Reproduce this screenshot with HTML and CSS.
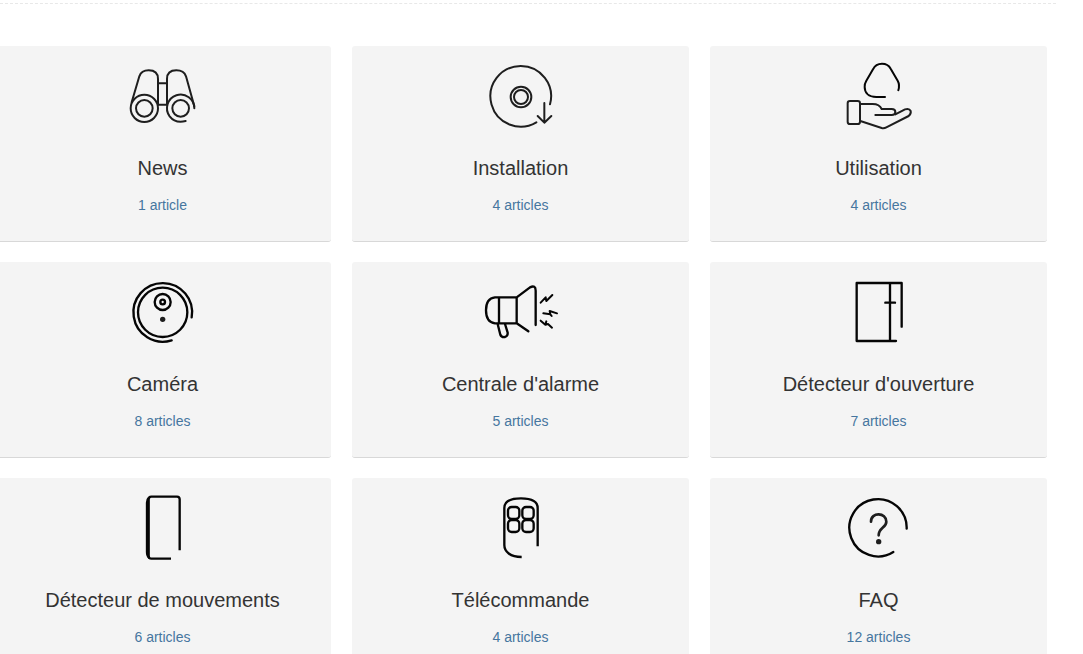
FILE: index.html
```
<!DOCTYPE html>
<html lang="fr">
<head>
<meta charset="UTF-8">
<meta name="viewport" content="width=device-width, initial-scale=1.0">
<title>Centre d'aide</title>
<link rel="stylesheet" href="styles.css">
</head>
<body>
  <hr class="divider">

  <!-- Category list -->
  <main class="categories">
    <a class="category" href="#news">
      <svg class="icon soft" viewBox="-9 3 273 240" aria-hidden="true">
        <circle cx="73" cy="160" r="41"/>
        <circle cx="73" cy="160" r="25"/>
        <circle cx="182" cy="160" r="25"/>
        <path d="M197 198Q166 206 149 184A41 41 0 1 1 223 160"/>
        <path d="M35 142L58 64Q64 46 86 46Q114 46 114 72V150M141 150V72Q141 46 169 46Q192 46 198 64L223 154M114 85H141M114 149H141"/>
      </svg>
      <h2 class="title">News</h2>
      <p class="count">1 article</p>
    </a>
    <a class="category" href="#installation">
      <svg class="icon soft" viewBox="0 3 273 240" aria-hidden="true">
        <path d="M184 202A91 91 0 1 1 225 148"/>
        <circle cx="138" cy="126" r="31"/>
        <circle cx="138" cy="126" r="21"/>
        <path d="M208 144V202M188 183L208 203L229 183"/>
      </svg>
      <h2 class="title">Installation</h2>
      <p class="count">4 articles</p>
    </a>
    <a class="category" href="#utilisation">
      <svg class="icon soft" viewBox="-6 3 273 240" aria-hidden="true">
        <path class="dark" d="M150 126H124C100 126 89 113 89 96Q88 87 94 77L114 43Q122 26 141 26Q159 26 167 41L188 77Q195 89 190 106"/>
        <rect x="38" y="138" width="37" height="69" rx="7"/>
        <path d="M76 147H113C129 147 136 153 140 162H170Q181 162 181 171Q181 180 170 180H121M76 198L140 219Q147 221 154 217L221 183Q229 177 227 168Q223 159 210 163L181 178"/>
      </svg>
      <h2 class="title">Utilisation</h2>
      <p class="count">4 articles</p>
    </a>

    <a class="category" href="#camera">
      <svg class="icon" viewBox="-9 0 273 240" aria-hidden="true">
        <path d="M155 205A88 88 0 1 1 215 136"/>
        <circle cx="128" cy="121" r="74"/>
        <circle cx="128" cy="90" r="24"/>
        <circle cx="128" cy="90" r="7"/>
        <circle class="dot" cx="128" cy="142" r="8"/>
      </svg>
      <h2 class="title">Caméra</h2>
      <p class="count">8 articles</p>
    </a>
    <a class="category" href="#centrale">
      <svg class="icon" viewBox="0 0 273 240" aria-hidden="true">
        <path d="M125 76H60Q33 79 33 115Q33 151 60 154H125ZM72 76V154M125 76L165 46Q182 38 182 56V159M125 154L160 178M68 156L76 188Q80 197 90 195Q99 192 98 182L90 156"/>
        <path class="bolt" d="M197 92L212 76L214 87L232 69M205 124L226 127L224 117L246 124M226 127L230 132M197 146L211 158L214 148M211 158L219 156L231 167"/>
      </svg>
      <h2 class="title">Centrale d'alarme</h2>
      <p class="count">5 articles</p>
    </a>
    <a class="category" href="#ouverture">
      <svg class="icon" viewBox="-6 0 273 240" aria-hidden="true">
        <path d="M183 207H65V33H200V164M165 33V207M151 92H180"/>
      </svg>
      <h2 class="title">Détecteur d'ouverture</h2>
      <p class="count">7 articles</p>
    </a>

    <a class="category" href="#mouvements">
      <svg class="icon butt" viewBox="-9 0 273 240" aria-hidden="true">
        <path d="M153 212H94Q86 212 86 204V34Q86 26 94 26H171Q179 26 179 34V187"/>
        <path d="M87 29Q81 34 81 44V192Q81 204 88 210"/>
      </svg>
      <h2 class="title">Détecteur de mouvements</h2>
      <p class="count">6 articles</p>
    </a>
    <a class="category" href="#telecommande">
      <svg class="icon butt" viewBox="0 0 273 240" aria-hidden="true">
        <path d="M140 207C106 207 88 191 88 171V60C88 41 106 31 138 31S188 41 188 60V175"/>
        <rect x="99" y="57" width="34" height="36" rx="11"/>
        <rect x="142" y="57" width="34" height="36" rx="11"/>
        <rect x="99" y="96" width="34" height="36" rx="11"/>
        <rect x="142" y="96" width="34" height="36" rx="11"/>
      </svg>
      <h2 class="title">Télécommande</h2>
      <p class="count">4 articles</p>
    </a>
    <a class="category" href="#faq">
      <svg class="icon" viewBox="-6 0 273 240" aria-hidden="true">
        <path d="M175 192A86 86 0 1 1 215 122"/>
        <path class="question" d="M108 101C108 71 154 73 154 101C154 119 131 119 131 142"/>
        <circle class="dot" cx="131" cy="161" r="8"/>
      </svg>
      <h2 class="title">FAQ</h2>
      <p class="count">12 articles</p>
    </a>
  </main>
</body>
</html>
```
FILE: styles.css
```
body {
  margin: 0;
  background-color: #ffffff;
  color: #333333;
  font-family: "Liberation Sans", Arial, sans-serif;
  font-size: 14px;
}

.divider {
  margin: 3px 27px 42px 0;
  border: none;
  border-top: 1px dashed #e8e8e8;
}

/* Grid runs a little past the left edge */
.categories {
  display: grid;
  grid-template-columns: repeat(3, 1fr);
  gap: 20px 21px;
  margin: 0 36px 20px -6px;
}

.category {
  display: flex;
  flex-direction: column;
  align-items: center;
  padding: 10px 10px 26px;
  border-bottom: 1px solid #d8d8d8;
  border-radius: 3px;
  background-color: #f4f4f4;
  color: #333333;
  text-align: center;
  text-decoration: none;
}

.category:hover {
  background-color: #eeeeee;
}

.title {
  margin: 18px 0 13px;
  font-size: 20px;
  font-weight: normal;
  line-height: 28px;
}

.count {
  margin: 0;
  color: #46769f;
  line-height: 20px;
}

/* Icons */
.icon {
  width: 91px;
  height: 80px;
  fill: none;
  stroke: #050505;
  stroke-width: 7;
  stroke-linecap: round;
  stroke-linejoin: round;
}

.soft {
  stroke: #1e1e1e;
  stroke-width: 6;
}

.butt {
  stroke-linecap: butt;
}

.dark {
  stroke: #050505;
}

.bolt {
  stroke-width: 6;
}

.question {
  stroke: #1e1e1e;
  stroke-width: 8;
}

.dot {
  fill: #1e1e1e;
  stroke: none;
}
```
